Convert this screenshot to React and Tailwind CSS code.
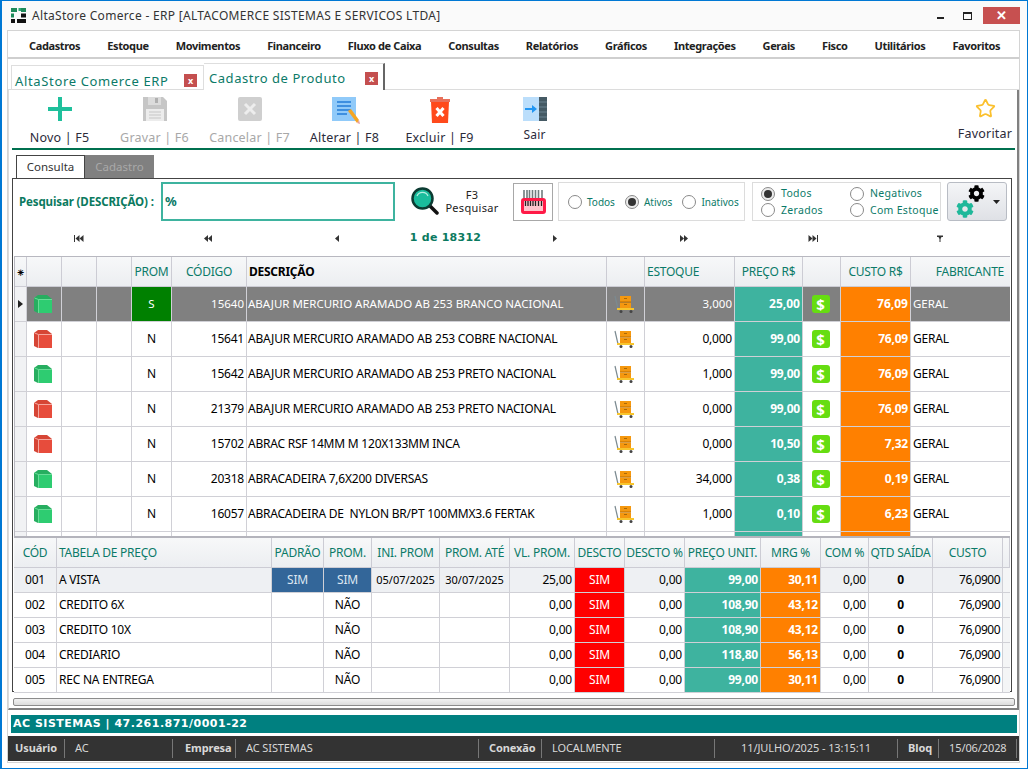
import { FaCog } from "react-icons/fa";
import { Star } from "lucide-react";

const sans = "font-['Tahoma','Noto_Sans','Open_Sans',sans-serif]";

const menus = ["Cadastros", "Estoque", "Movimentos", "Financeiro", "Fluxo de Caixa", "Consultas", "Relatórios", "Gráficos", "Integrações", "Gerais", "Fisco", "Utilitários", "Favoritos"];

const products = [
  { on: true, prom: "S", cod: "15640", desc: "ABAJUR MERCURIO ARAMADO AB 253 BRANCO NACIONAL", est: "3,000", price: "25,00", cost: "76,09" },
  { on: false, prom: "N", cod: "15641", desc: "ABAJUR MERCURIO ARAMADO AB 253 COBRE NACIONAL", est: "0,000", price: "99,00", cost: "76,09" },
  { on: true, prom: "N", cod: "15642", desc: "ABAJUR MERCURIO ARAMADO AB 253 PRETO NACIONAL", est: "1,000", price: "99,00", cost: "76,09" },
  { on: false, prom: "N", cod: "21379", desc: "ABAJUR MERCURIO ARAMADO AB 253 PRETO NACIONAL", est: "0,000", price: "99,00", cost: "76,09" },
  { on: false, prom: "N", cod: "15702", desc: "ABRAC RSF 14MM M 120X133MM INCA", est: "0,000", price: "10,50", cost: "7,32" },
  { on: true, prom: "N", cod: "20318", desc: "ABRACADEIRA 7,6X200 DIVERSAS", est: "34,000", price: "0,38", cost: "0,19" },
  { on: true, prom: "N", cod: "16057", desc: "ABRACADEIRA DE  NYLON BR/PT 100MMX3.6 FERTAK", est: "1,000", price: "0,10", cost: "6,23" },
];

const prices = [
  { cod: "001", nome: "A VISTA", padrao: true, prom: "SIM", ini: "05/07/2025", ate: "30/07/2025", vl: "25,00", unit: "99,00", mrg: "30,11" },
  { cod: "002", nome: "CREDITO 6X", prom: "NÃO", vl: "0,00", unit: "108,90", mrg: "43,12" },
  { cod: "003", nome: "CREDITO 10X", prom: "NÃO", vl: "0,00", unit: "108,90", mrg: "43,12" },
  { cod: "004", nome: "CREDIARIO", prom: "NÃO", vl: "0,00", unit: "118,80", mrg: "56,13" },
  { cod: "005", nome: "REC NA ENTREGA", prom: "NÃO", vl: "0,00", unit: "99,00", mrg: "30,11" },
];

const mainCols = "grid grid-cols-[12px_35px_35px_35px_40px_75px_360px_38px_90px_68px_38px_70px_100px]";
const subCols = "grid grid-cols-[43px_215px_52px_48px_68px_70px_65px_50px_60px_76px_60px_48px_64px_70px_7px]";
const headCell = "flex items-center border-r border-b border-[#ccccd4] bg-gradient-to-b from-[#f7f8f9] to-[#eceef1] text-[#0b7a68] text-[12px] tracking-[-0.25px] h-[30px] overflow-hidden whitespace-nowrap";

function Logo() {
  return (
    <svg width="15" height="15" viewBox="0 0 15 15">
      <rect x="0" y="0" width="6" height="4" fill="#1e8a5a" />
      <rect x="7.5" y="0" width="2.5" height="3" fill="#2ca874" />
      <rect x="10" y="0" width="5" height="4" fill="#1e8a5a" />
      <rect x="0" y="5.5" width="3" height="4" fill="#1e8a5a" />
      <rect x="10" y="5.5" width="5" height="4" fill="#111" />
      <rect x="0" y="11" width="4" height="4" fill="#111" />
      <rect x="6" y="11" width="9" height="4" fill="#111" />
    </svg>
  );
}

function CloseTab() {
  return (
    <span className="flex h-[13px] w-[13px] items-center justify-center bg-[#c44f4f] text-[9px] font-bold leading-none text-white">x</span>
  );
}

function PlusIcon() {
  return (
    <svg width="24" height="24" viewBox="0 0 24 24">
      <rect x="10" y="0" width="4" height="24" fill="#1fc09c" />
      <rect x="0" y="10" width="24" height="4" fill="#1fc09c" />
    </svg>
  );
}

function SaveIcon() {
  return (
    <svg width="24" height="24" viewBox="0 0 24 24">
      <path d="M0 0H20L24 4V24H0Z" fill="#c6c6c6" />
      <rect x="5" y="0" width="13" height="8" fill="#dcdcdc" />
      <rect x="12" y="1" width="3" height="5" fill="#b0b0b0" />
      <rect x="3" y="12" width="18" height="12" fill="#ececec" />
      <path d="M6 15H18M6 18H18M6 21H18" stroke="#c6c6c6" />
    </svg>
  );
}

function CancelIcon() {
  return (
    <svg width="24" height="24" viewBox="0 0 24 24">
      <rect width="24" height="24" rx="2" fill="#cfcfcf" />
      <path d="M7 7L17 17M17 7L7 17" stroke="#ededed" strokeWidth="3" />
    </svg>
  );
}

function EditIcon() {
  return (
    <svg width="29" height="29" viewBox="0 0 29 29">
      <rect width="24" height="24" fill="#90caf9" />
      <path d="M5 5H19M5 9H19M5 13H19M5 17H15" stroke="#3d8fe0" strokeWidth="2" />
      <path d="M16 14L19 12L27 23L25 26Z" fill="#f5a623" />
      <path d="M25 26L27 23L28 27Z" fill="#e8a0a0" />
    </svg>
  );
}

function TrashIcon() {
  return (
    <svg width="20" height="26" viewBox="0 0 20 26">
      <rect x="0" y="2" width="20" height="3" fill="#e8705a" />
      <rect x="7" y="0" width="6" height="2" fill="#e8705a" />
      <path d="M1 5H19L18 26H2Z" fill="#ff4a1c" />
      <path d="M6.5 11L13.5 19M13.5 11L6.5 19" stroke="#fff" strokeWidth="3" />
    </svg>
  );
}

function ExitIcon() {
  return (
    <svg width="24" height="24" viewBox="0 0 24 24">
      <rect width="16" height="24" fill="#bbdefb" />
      <rect x="16" width="8" height="24" fill="#455a64" />
      <path d="M16 5H24M16 10H24M16 15H24M16 20H24" stroke="#6b8290" />
      <path d="M2 11H9V8L14 12L9 16V13H2Z" fill="#2196f3" />
    </svg>
  );
}

function SearchIcon() {
  return (
    <svg width="28" height="28" viewBox="0 0 28 28">
      <path d="M18 18L26 26" stroke="#111" strokeWidth="3.5" strokeLinecap="round" />
      <circle cx="11.5" cy="11.5" r="10" fill="#1abc9c" stroke="#0c3b32" strokeWidth="2.5" />
      <path d="M6 9A6 6 0 0 1 17 9" fill="none" stroke="#b8efe2" strokeWidth="1.2" />
    </svg>
  );
}

function BarcodeIcon() {
  return (
    <svg width="25" height="24" viewBox="0 0 25 24">
      <path d="M3 0V11M6 0V11M8.5 0V11M11.5 0V11M14.5 0V11M17.5 0V11M21 0V11" stroke="#6f7c7d" strokeWidth="1.6" />
      <rect x="1.5" y="9.5" width="22" height="13" rx="1.5" fill="#ffc4cc" stroke="#ff1a47" strokeWidth="3" />
      <path d="M4.5 11V16M7 11V16M9.5 11V16M12 11V16M14.5 11V16M17.5 11V16M20.5 11V16" stroke="#222" strokeWidth="1.3" />
    </svg>
  );
}

function Cube({ on }) {
  const front = on ? "#2ecc71" : "#e74c3c";
  const side = on ? "#27ae60" : "#d64535";
  const line = on ? "#69dc98" : "#f5a79f";
  return (
    <svg width="18" height="18" viewBox="0 0 18 18">
      <path d="M0 3L4 0H13L18 4V18H4L0 16Z" fill={side} />
      <rect x="4.5" y="4.5" width="13.5" height="13.5" fill={front} />
      <path d="M0.5 3L4.5 4.5H18M4.5 4.5V18" fill="none" stroke={line} />
    </svg>
  );
}

function Cart() {
  return (
    <svg width="20" height="18" viewBox="0 0 20 18">
      <path d="M1 1L4 14" stroke="#7b8a90" strokeWidth="1.2" />
      <rect x="6" y="1" width="11" height="6" fill="#f5980f" />
      <rect x="6" y="7.5" width="11" height="5.5" fill="#f5980f" />
      <path d="M6 7H17" stroke="#b86f05" />
      <rect x="10" y="3" width="3" height="1" fill="#a8690a" />
      <rect x="10" y="9" width="3" height="1" fill="#a8690a" />
      <rect x="3" y="13" width="17" height="2" fill="#f7c52d" />
      <circle cx="7" cy="16.5" r="1.5" fill="#444" />
      <circle cx="17" cy="16.5" r="1.5" fill="#444" />
    </svg>
  );
}

function Dollar() {
  return (
    <span className={`flex h-[18px] w-[18px] items-center justify-center rounded-[3px] bg-[#66dd11] text-[15px] font-bold leading-none text-white ${sans}`}>$</span>
  );
}

function NavGlyph({ kind }) {
  const tri = (x, right) => (right ? `M${x} 1L${x + 4} 4.5L${x} 8Z` : `M${x + 4} 1L${x} 4.5L${x + 4} 8Z`);
  const stroke = "#333";
  return (
    <svg width="10" height="9" viewBox="0 0 10 9">
      {kind === "first" && <><rect x="0" y="1" width="1" height="7" fill={stroke} /><path d={tri(1.5, false)} fill={stroke} /><path d={tri(5.5, false)} fill={stroke} /></>}
      {kind === "prevPage" && <><path d={tri(1, false)} fill={stroke} /><path d={tri(5, false)} fill={stroke} /></>}
      {kind === "prev" && <path d={tri(3, false)} fill={stroke} />}
      {kind === "next" && <path d={tri(3, true)} fill={stroke} />}
      {kind === "nextPage" && <><path d={tri(1, true)} fill={stroke} /><path d={tri(5, true)} fill={stroke} /></>}
      {kind === "last" && <><path d={tri(0.5, true)} fill={stroke} /><path d={tri(4.5, true)} fill={stroke} /><rect x="9" y="1" width="1" height="7" fill={stroke} /></>}
      {kind === "filter" && <path d="M2 1.5H8V3H2ZM3.5 3H6.5L5.5 5V8H4.5V5Z" fill={stroke} />}
    </svg>
  );
}

function Radio({ label, checked, wide }) {
  return (
    <label className={`flex items-center whitespace-nowrap text-[#0b7a68] ${wide ? "gap-[6px] text-[10.5px] tracking-[0.3px]" : "gap-[5px] text-[10px]"}`}>
      <span className={`flex h-[14px] w-[14px] shrink-0 items-center justify-center rounded-full border border-[#8a8a8a] ${checked ? "bg-[#ececec]" : "bg-white"}`}>
        {checked && <span className="h-[8px] w-[8px] rounded-full bg-[#333]" />}
      </span>
      {label}
    </label>
  );
}

function ToolButton({ icon, label, disabled, low }) {
  return (
    <div className="flex w-[95px] flex-col items-center">
      <div className="flex h-[30px] w-full items-start justify-center">{icon}</div>
      <span className={`whitespace-nowrap text-center text-[12.5px] tracking-[0.2px] ${low ? "-mt-[1px] text-[12px]" : "mt-[2px]"} ${disabled ? "text-[#a8a8a8]" : "text-[#2b2b3a]"}`}>{label}</span>
    </div>
  );
}

function ProductRow({ p, selected }) {
  const bg = selected ? "bg-[#808080] text-white" : "bg-white text-black";
  const cell = `flex items-center border-r border-b border-[#d0d0d6] h-[35px] overflow-hidden whitespace-pre ${bg} ${selected ? "text-[11.5px]" : "text-[12px] tracking-[-0.22px]"}`;
  return (
    <div className={mainCols}>
      <div className="flex h-[35px] items-center justify-center border-r border-b border-[#d0d0d6] bg-[#f1f2f4]">
        {selected && <svg width="5" height="8" viewBox="0 0 5 8"><path d="M0 0L5 4L0 8Z" fill="#222" /></svg>}
      </div>
      <div className={`${cell} pl-[7px]`}><Cube on={p.on} /></div>
      <div className={cell} />
      <div className={cell} />
      <div className={`${cell} justify-center ${selected ? "!bg-[#008000]" : ""}`}>{p.prom}</div>
      <div className={`${cell} justify-end pr-[2px]`}>{p.cod}</div>
      <div className={`${cell} pl-[1px]`}>{p.desc}</div>
      <div className={`${cell} justify-center pr-[3px]`}><Cart /></div>
      <div className={`${cell} justify-end pr-[2px]`}>{p.est}</div>
      <div className={`${cell} justify-end pr-[2px] text-[12px] font-bold !text-white !bg-[#3eb39f]`}>{p.price}</div>
      <div className={`${cell} justify-center pr-[2px]`}><Dollar /></div>
      <div className={`${cell} justify-end pr-[2px] text-[12px] font-bold !text-white !bg-[#ff8000]`}>{p.cost}</div>
      <div className={`${cell} pl-[2px]`}>GERAL</div>
    </div>
  );
}

function PriceRow({ r, first }) {
  const bg = first ? "bg-[#eef0f3]" : "bg-white";
  const cell = `flex h-[25px] items-center overflow-hidden whitespace-nowrap border-r border-b border-[#d0d0d6] text-[12px] tracking-[-0.22px] text-black ${bg}`;
  const right = `${cell} justify-end pr-[2px]`;
  const center = `${cell} justify-center`;
  return (
    <div className={subCols}>
      <div className={center}>{r.cod}</div>
      <div className={`${cell} pl-[2px]`}>{r.nome}</div>
      <div className={`${center} ${r.padrao ? "!bg-[#336699] !text-[#dfe8f2]" : ""}`}>{r.padrao ? "SIM" : ""}</div>
      <div className={`${center} ${r.prom === "SIM" ? "!bg-[#336699] !text-[#dfe8f2]" : ""}`}>{r.prom}</div>
      <div className={`${center} !text-[11px] !tracking-[0px]`}>{r.ini}</div>
      <div className={`${center} !text-[11px] !tracking-[0px]`}>{r.ate}</div>
      <div className={right}>{r.vl}</div>
      <div className={`${center} !bg-[#ff0000] !text-white`}>SIM</div>
      <div className={right}>0,00</div>
      <div className={`${right} font-bold !bg-[#3eb39f] !text-white`}>{r.unit}</div>
      <div className={`${right} font-bold !bg-[#ff8000] !text-white`}>{r.mrg}</div>
      <div className={right}>0,00</div>
      <div className={`${center} font-bold`}>0</div>
      <div className={`${right} !tracking-[-0.5px]`}>76,0900</div>
      <div className="h-[25px] border-b border-[#d0d0d6] bg-[#f4f5f6]" />
    </div>
  );
}

export default function App() {
  const mainHead = ["", "", "", "", "PROM", "CÓDIGO", "DESCRIÇÃO", "", "ESTOQUE", "PREÇO R$", "", "CUSTO R$", "FABRICANTE"];
  const subHead = ["CÓD", "TABELA DE PREÇO", "PADRÃO", "PROM.", "INI. PROM", "PROM. ATÉ", "VL. PROM.", "DESCTO", "DESCTO %", "PREÇO UNIT.", "MRG %", "COM %", "QTD SAÍDA", "CUSTO", ""];

  return (
    <div className={`flex h-[769px] w-[1028px] flex-col overflow-hidden border border-l-2 border-[#0078d4] bg-white ${sans}`}>
      {/* title bar */}
      <div className="flex h-[29px] shrink-0 items-center bg-[#fafafa] pl-[9px]">
        <Logo />
        <span className="ml-[6px] text-[12px] tracking-[0.31px] text-[#333]">AltaStore Comerce - ERP [ALTACOMERCE SISTEMAS E SERVICOS LTDA]</span>
        <div className="ml-auto flex items-center">
          <span className="mt-[5px] h-[2px] w-[7px] bg-[#222]" />
          <span className="ml-[19px] h-[8px] w-[9px] border border-t-2 border-[#222]" />
          <span className="ml-[11px] mr-[7px] flex h-[17px] w-[37px] items-center justify-center bg-[#c75050] text-[13px] font-bold leading-none text-white">✕</span>
        </div>
      </div>

      {/* window body */}
      <div className="ml-[5px] mr-[7px] flex h-[733px] flex-col border border-[#d4d4d4]">
        {/* menu */}
        <div className="flex h-[28px] shrink-0 items-center gap-[27px] whitespace-nowrap border-b-2 border-[#cfcfcf] pl-[21px] pt-[4px] text-[11px] font-bold tracking-[-0.37px] text-[#222]">
          {menus.map((m) => (
            <span key={m}>{m}</span>
          ))}
        </div>

        {/* form tabs */}
        <div className="flex h-[31px] shrink-0 items-end border-b border-[#dcdcdc] pl-[3px]">
          <div className="-mb-[1px] flex h-[25px] w-[193px] items-center border border-b-0 border-[#dedede] pl-[3px] pr-[6px] pt-[4px]">
            <span className="mt-[3px] text-[13px] tracking-[0.65px] text-[#0b7a68]">AltaStore Comerce ERP</span>
            <span className="ml-auto"><CloseTab /></span>
          </div>
          <div className="-mb-[1px] flex h-[27px] w-[181px] items-center border-t border-r-2 border-[#dedede] border-r-[#666] bg-white pl-[5px] pr-[5px] pt-[3px]">
            <span className="mt-[1px] text-[13px] tracking-[0.55px] text-[#0b7a68]">Cadastro de Produto</span>
            <span className="ml-auto"><CloseTab /></span>
          </div>
        </div>

        {/* content */}
        <div className="flex h-[620px] shrink-0 flex-col border-r-2 border-b-2 border-l border-[#808080] border-l-[#dcdcdc]">
          {/* toolbar */}
          <div className="flex h-[58px] shrink-0 items-start pl-[3px] pt-[7px]">
            <ToolButton icon={<PlusIcon />} label="Novo | F5" />
            <ToolButton icon={<SaveIcon />} label="Gravar | F6" disabled />
            <ToolButton icon={<CancelIcon />} label="Cancelar | F7" disabled />
            <ToolButton icon={<div className="pl-[4px]"><EditIcon /></div>} label="Alterar | F8" />
            <ToolButton icon={<TrashIcon />} label="Excluir | F9" />
            <ToolButton icon={<ExitIcon />} label="Sair" low />
            <div className="ml-auto mr-[2px] flex w-[60px] flex-col items-center">
              <Star size={21} strokeWidth={2} color="#fbc02d" className="mt-[1px]" />
              <span className="mt-[6px] text-[12.5px] tracking-[0.2px] text-[#2b2b3a]">Favoritar</span>
            </div>
          </div>
          <div className="ml-[3px] mr-[2px] h-[2px] shrink-0 bg-[#00704f]" />

          {/* consulta / cadastro tabs */}
          <div className="mt-[5px] flex h-[23px] shrink-0 pl-[7px]">
            <div className="flex w-[69px] items-center justify-center border border-b-0 border-[#444] bg-white text-[11.5px] text-[#333]">Consulta</div>
            <div className="flex w-[69px] items-center justify-center bg-[#808080] text-[11.5px] text-[#a9a9a9]">Cadastro</div>
          </div>

          {/* panel */}
          <div className="ml-[3px] h-[514px] w-[1000px] shrink-0 border border-[#444]">
            {/* search row */}
            <div className="flex h-[43px] items-start pt-[3px]">
              <span className="mt-[11px] w-[148px] shrink-0 whitespace-nowrap pl-[6px] text-[11.5px] font-bold tracking-[-0.12px] text-[#0b7a60]">Pesquisar (DESCRIÇÃO) :</span>
              <div className="flex h-[39px] w-[234px] shrink-0 items-center border-2 border-[#3eb39f] pl-[2px] text-[13px] font-bold text-[#0b7a68]">%</div>
              <div className="ml-[16px] mt-[5px] shrink-0"><SearchIcon /></div>
              <div className="ml-[2px] flex w-[62px] shrink-0 flex-col items-center pt-[6px] text-[11px] leading-[13px] tracking-[0.3px] text-[#222]">
                <span>F3</span>
                <span>Pesquisar</span>
              </div>
              <div className="ml-[10px] mt-[1px] flex h-[38px] w-[40px] shrink-0 items-center justify-center border border-[#a8a8a8]"><BarcodeIcon /></div>
              <div className="ml-[5px] flex h-[39px] w-[187px] shrink-0 items-center gap-[10px] border border-[#dcdcdc] pl-[9px] pt-[1px]">
                <Radio label="Todos" />
                <Radio label="Ativos" checked />
                <Radio label="Inativos" />
              </div>
              <div className="ml-[7px] grid h-[39px] w-[189px] shrink-0 grid-cols-[89px_1fr] content-center gap-y-[1px] border border-[#dcdcdc] pl-[8px] pt-[1px]">
                <Radio label="Todos" checked wide />
                <Radio label="Negativos" wide />
                <Radio label="Zerados" wide />
                <Radio label="Com Estoque" wide />
              </div>
              <div className="relative ml-[6px] h-[39px] w-[60px] shrink-0 rounded-[3px] border border-[#b8bcc4] bg-gradient-to-b from-[#f4f5f7] to-[#dfe1e6]">
                <FaCog size={17} color="#000" className="absolute left-[20px] top-[2px]" />
                <FaCog size={18} color="#1fb89a" className="absolute left-[8px] top-[17px]" />
                <svg width="7" height="4" viewBox="0 0 7 4" className="absolute right-[6px] top-[17px]"><path d="M0 0H7L3.5 4Z" fill="#222" /></svg>
              </div>
            </div>

            {/* navigator */}
            <div className="ml-[1px] grid h-[34px] grid-cols-[129px_129px_129px_89px_129px_129px_129px_129px] items-center justify-items-center pb-[2px]">
              <NavGlyph kind="first" />
              <NavGlyph kind="prevPage" />
              <NavGlyph kind="prev" />
              <span className="whitespace-nowrap font-['DejaVu_Sans',sans-serif] text-[11px] font-bold tracking-[0.25px] text-[#0b7a60]">1 de 18312</span>
              <NavGlyph kind="next" />
              <NavGlyph kind="nextPage" />
              <NavGlyph kind="last" />
              <span className="mr-[3px]"><NavGlyph kind="filter" /></span>
            </div>

            {/* products grid */}
            <div className="ml-[1px] h-[280px] w-[996px] overflow-hidden border-t border-l border-[#b8b8c0]">
              <div className={mainCols}>
                {mainHead.map((h, i) => (
                  <div
                    key={i}
                    className={`${headCell} ${i === 0 ? "justify-center text-black" : ""} ${i === 6 ? "pl-[2px] font-bold !text-black" : ""} ${i === 8 ? "pl-[2px]" : ""} ${[4, 5, 9, 11].includes(i) ? "justify-center" : ""} ${i === 12 ? "justify-end pr-[6px]" : ""}`}
                  >
                    {i === 0 ? "⁕" : h}
                  </div>
                ))}
              </div>
              {products.map((p, i) => (
                <ProductRow key={p.cod} p={p} selected={i === 0} />
              ))}
              <div className={mainCols}>
                {mainHead.map((_, i) => (
                  <div
                    key={i}
                    className={`h-[10px] border-r border-[#d0d0d6] ${i === 9 ? "bg-[#3eb39f]" : i === 11 ? "bg-[#ff8000]" : i === 0 ? "bg-[#f1f2f4]" : "bg-white"}`}
                  />
                ))}
              </div>
            </div>

            {/* price tables grid */}
            <div className="ml-[1px] w-[996px] border-t-2 border-[#b4b4bc]">
              <div className={subCols}>
                {subHead.map((h, i) => (
                  <div key={i} className={`${headCell} ${i === 1 ? "pl-[2px]" : "justify-center"}`}>{h}</div>
                ))}
              </div>
              {prices.map((r, i) => (
                <PriceRow key={r.cod} r={r} first={i === 0} />
              ))}
            </div>
          </div>

          {/* scrollbar */}
          <div className="ml-[4px] mt-[6px] h-[8px] w-[1002px] shrink-0 rounded-[2px] border border-[#8c8c8c] bg-gradient-to-b from-[#f2f2f2] to-[#dcdcdc]" />
        </div>

        {/* company bar */}
        <div className="ml-[3px] mr-[2px] mt-[5px] flex h-[18px] shrink-0 items-center bg-[#008080] pl-[2px] font-['DejaVu_Sans',sans-serif] text-[11px] font-bold tracking-[0.5px] text-white">
          AC SISTEMAS | 47.261.871/0001-22
        </div>

        {/* status bar */}
        <div className="mt-[3px] flex h-[25px] shrink-0 items-center bg-[#333] text-[11px] tracking-[-0.1px] text-[#d8d8d8]">
          <div className="flex h-[19px] w-[57px] items-center border-r border-[#777] pl-[7px] font-bold">Usuário</div>
          <div className="flex h-[19px] w-[108px] items-center border-r border-[#777] pl-[10px]">AC</div>
          <div className="flex h-[19px] w-[63px] items-center border-r border-[#777] pl-[12px] font-bold">Empresa</div>
          <div className="flex h-[19px] w-[243px] items-center border-r border-[#777] pl-[10px]">AC SISTEMAS</div>
          <div className="flex h-[19px] w-[63px] items-center border-r border-[#777] pl-[10px] font-bold">Conexão</div>
          <div className="flex h-[19px] w-[173px] items-center border-r border-[#777] pl-[10px]">LOCALMENTE</div>
          <div className="flex h-[19px] w-[183px] items-center justify-center border-r border-[#777]">11/JULHO/2025 - 13:15:11</div>
          <div className="flex h-[19px] w-[41px] items-center border-r border-[#777] pl-[10px] font-bold">Bloq</div>
          <div className="flex h-[19px] w-[78px] items-center border-r border-[#777] pl-[10px]">15/06/2028</div>
        </div>
      </div>
    </div>
  );
}
